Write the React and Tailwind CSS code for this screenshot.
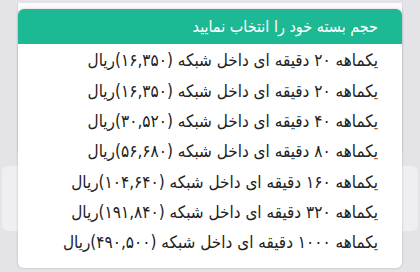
const packages = [
  "یکماهه ۲۰ دقیقه ای داخل شبکه (۱۶,۳۵۰)ریال",
  "یکماهه ۲۰ دقیقه ای داخل شبکه (۱۶,۳۵۰)ریال",
  "یکماهه ۴۰ دقیقه ای داخل شبکه (۳۰,۵۲۰)ریال",
  "یکماهه ۸۰ دقیقه ای داخل شبکه (۵۶,۶۸۰)ریال",
  "یکماهه ۱۶۰ دقیقه ای داخل شبکه (۱۰۴,۶۴۰)ریال",
  "یکماهه ۳۲۰ دقیقه ای داخل شبکه (۱۹۱,۸۴۰)ریال",
  "یکماهه ۱۰۰۰ دقیقه ای داخل شبکه (۴۹۰,۵۰۰)ریال",
];

export default function App() {
  return (
    <div
      className="relative w-[420px] h-[272px] overflow-hidden bg-[#e3e3e8]"
      style={{ fontFamily: '"DejaVu Sans Condensed", "DejaVu Sans", sans-serif' }}
    >
      {/* ---------- PAGE BEHIND (dimmed) ---------- */}
      <div className="flex flex-col pt-[3px]">
        <div className="mx-[17px] h-[150px] bg-[#fbfbfd] border-x border-[#d6d6dc]" />
        <div className="mx-[2px] mt-[13px] h-[65px] rounded-md bg-[#efeff2]" />
      </div>

      {/* ---------- DIALOG ---------- */}
      <div
        dir="rtl"
        className="absolute left-[18px] top-[9px] w-[384px] h-[259px] rounded-md bg-white shadow-[0_0_3px_rgba(0,0,0,0.18)] flex flex-col"
      >
        <div className="h-[35px] rounded-t-md bg-[#1db994] flex items-center pr-[24px] text-white text-[16px]">
          حجم بسته خود را انتخاب نمایید
        </div>
        <ul className="pt-[2px]">
          {packages.map((p, i) => (
            <li
              key={i}
              className="h-[30.3px] flex items-center pr-[24px] text-[17px] text-[#222]"
            >
              {p}
            </li>
          ))}
        </ul>
      </div>
    </div>
  );
}
